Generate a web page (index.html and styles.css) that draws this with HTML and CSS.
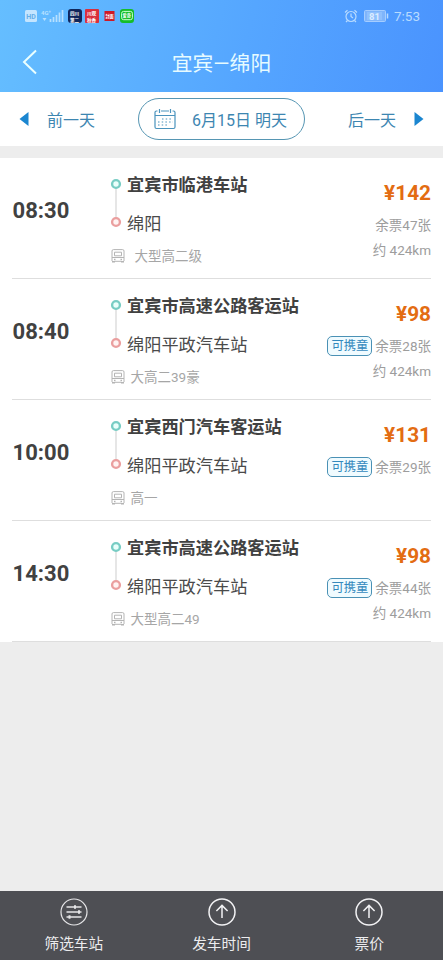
FILE: index.html
```html
<!DOCTYPE html>
<html lang="zh-CN">
<head>
<meta charset="utf-8">
<title>宜宾—绵阳</title>
<link rel="stylesheet" href="styles.css">
</head>
<body>
<svg class="defs" width="0" height="0">
  <symbol id="bus" viewBox="0 0 14 14"><g fill="none" stroke="#b4b4b4" stroke-width="1"><path d="M1 12V2Q1 .6 2.400 .6h9.200Q13 .6 13 2v10M3.500 3.200h7v3.600h-7zM1 8.500h12M4 12.300h6"/></g><path fill="#b4b4b4" d="M3 9.800h1.500v1.400H3zM9.500 9.800H11v1.400H9.500zM1 12h3v1.400H1zM10 12h3v1.400h-3z"/></symbol>
  <symbol id="route" viewBox="0 0 12 52"><path d="M6 10v31" stroke="#d6d6d6" stroke-width="1.2"/><circle cx="6" cy="6" r="3.900" fill="#eafffb" stroke="#78cdc4" stroke-width="2.400"/><circle cx="6" cy="44" r="3.900" fill="#fff3f2" stroke="#ea9f9f" stroke-width="2.400"/></symbol>
  <symbol id="up" viewBox="0 0 28 28"><g fill="none" stroke="#f2f2f4" stroke-width="1.5"><circle cx="14" cy="14" r="13"/><path d="M14 20V7.6M8.4 13 14 7.4l5.6 5.6"/></g></symbol>
</svg>
<header class="header">
  <div class="status">
    <svg class="status-left" width="110" height="16" viewBox="0 0 110 16">
      <rect x="0" y="2" width="12" height="12" rx="1.5" fill="#c4e5ff"/>
      <text x="1.2" y="10.500" class="hd">HD</text>
      <text x="16" y="7" class="net">4G⁺</text>
      <path d="M17.5 10h4l-2 3z" fill="#b7e0ff"/>
      <path d="M25.5 14v-3M28.5 14V9M31.5 14V7M34.5 14V4.500M37.500 14V2" stroke="#b7e0ff" stroke-width="1.7"/>
      <rect x="43" y="1" width="14" height="14" rx="3" fill="#10265a"/>
      <text x="45" y="6.800" class="app">四川</text><text x="45" y="13.600" class="app">第二</text>
      <rect x="60" y="1" width="14" height="14" rx="1" fill="#d92f3d"/>
      <text x="62" y="6.800" class="app">川观</text><text x="62" y="13.600" class="app">秋香</text>
      <rect x="79.500" y="3" width="10" height="10" fill="#cf1825"/>
      <text x="80.400" y="9.600" class="app app-sm">封面</text>
      <rect x="95" y="1" width="14" height="14" rx="3" fill="#15bd29"/>
      <rect x="96.600" y="3.400" width="10.800" height="8.300" rx="2" fill="none" stroke="#caffd0"/><text x="97.500" y="9.400" class="app app-sm">爱奇</text>
    </svg>
    <div class="status-right">
      <svg width="14" height="14" viewBox="0 0 14 14" fill="none" stroke="#b8dbff" stroke-width="1.2"><circle cx="7" cy="7.500" r="5"/><path d="M7 4.500v3l2 1.500M1 3.500 3.500 1.200M13 3.500 10.500 1.200M3.500 11.500 2 13M10.500 11.500 12 13"/></svg>
      <svg class="battery" width="25" height="12" viewBox="0 0 25 12"><rect x=".5" y=".5" width="21" height="11" rx="1" fill="#7fb5fb" stroke="#a5cdff"/><rect x="3" y="2" width="15" height="8" fill="#8fc0fd"/><text x="5" y="9.600" class="level">81</text><path d="M23.500 3.500v5" stroke="#b8dbff" stroke-width="1.500"/></svg>
      <span class="clock">7:53</span>
    </div>
  </div>
  <div class="nav">
    <svg class="back" width="16" height="26" viewBox="0 0 16 26"><path d="M14 1.500 2 13l12 11.500" fill="none" stroke="#eaffff" stroke-width="2"/></svg>
    <h1 class="title">宜宾—绵阳</h1>
  </div>
</header>
<div class="days">
  <div class="day"><svg width="10" height="14" viewBox="0 0 10 14"><path d="M9.500 0v14L.5 7z" fill="#1b86d0"/></svg><span>前一天</span></div>
  <div class="date">
    <svg width="22" height="22" viewBox="0 0 22 22" fill="none" stroke="#4a93bd" stroke-width="1.200"><path d="M3.500 3H2.500A1.500 1.500 0 0 0 1 4.500v14.500a1.500 1.500 0 0 0 1.500 1.500h17a1.500 1.500 0 0 0 1.500-1.500V4.500A1.500 1.500 0 0 0 19.500 3h-1M7 3h8M1 7.500h20M5.500 1v4M16.500 1v4"/><path d="M8 11h11M4 14h15M4 17h11" stroke-dasharray="1.500 2.200"/></svg>
    <span>6月15日 明天</span>
  </div>
  <div class="day next"><span>后一天</span><svg width="10" height="14" viewBox="0 0 10 14"><path d="M.5 0v14l9-7z" fill="#1b86d0"/></svg></div>
</div>
<main class="list">
  <article class="trip">
    <div class="time">08:30</div>
    <svg class="route"><use href="#route"/></svg>
    <div class="places"><div class="from">宜宾市临港车站</div><div class="to">绵阳</div><div class="kind"><svg><use href="#bus"/></svg><span class="indent">大型高二级</span></div></div>
    <div class="fare"><div class="price">¥142</div><div class="left">余票47张</div><div class="km">约 424km</div></div>
  </article>
  <article class="trip">
    <div class="time">08:40</div>
    <svg class="route"><use href="#route"/></svg>
    <div class="places"><div class="from">宜宾市高速公路客运站</div><div class="to">绵阳平政汽车站</div><div class="kind"><svg><use href="#bus"/></svg><span>大高二39豪</span></div></div>
    <div class="fare"><div class="price">¥98</div><div class="left"><span class="tag">可携童</span>余票28张</div><div class="km">约 424km</div></div>
  </article>
  <article class="trip">
    <div class="time">10:00</div>
    <svg class="route"><use href="#route"/></svg>
    <div class="places"><div class="from">宜宾西门汽车客运站</div><div class="to">绵阳平政汽车站</div><div class="kind"><svg><use href="#bus"/></svg><span>高一</span></div></div>
    <div class="fare"><div class="price">¥131</div><div class="left"><span class="tag">可携童</span>余票29张</div></div>
  </article>
  <article class="trip">
    <div class="time">14:30</div>
    <svg class="route"><use href="#route"/></svg>
    <div class="places"><div class="from">宜宾市高速公路客运站</div><div class="to">绵阳平政汽车站</div><div class="kind"><svg><use href="#bus"/></svg><span>大型高二49</span></div></div>
    <div class="fare"><div class="price">¥98</div><div class="left"><span class="tag">可携童</span>余票44张</div><div class="km">约 424km</div></div>
  </article>
</main>
<footer class="tools">
  <div class="tool"><svg viewBox="0 0 28 28" fill="none" stroke="#e6e6e8" stroke-width="1.200"><circle cx="14" cy="14" r="13"/><path d="M6.500 9h15M6.500 14h15M6.500 19h15" stroke-width="1.500"/><path d="M15 7.200v3.600M19 12.200v3.600M9.500 17.200v3.600" stroke-width="2"/></svg><span>筛选车站</span></div>
  <div class="tool"><svg><use href="#up"/></svg><span>发车时间</span></div>
  <div class="tool"><svg><use href="#up"/></svg><span>票价</span></div>
</footer>
</body>
</html>
```
FILE: styles.css
```css
* { box-sizing: border-box; }
body {
  margin: 0;
  height: 960px;
  display: flex;
  flex-direction: column;
  background: #ededed;
  font-family: Roboto, "Noto Sans CJK SC", sans-serif;
  color: #414141;
  white-space: nowrap;
}
svg { display: block; flex: none; }
.defs { position: absolute; }
.header {
  height: 92px;
  background: linear-gradient(104deg, #65beff, #55a6ff 55%, #4a93fe);
}
.status {
  height: 32px;
  padding: 0 23px 0 25px;
  display: flex;
  align-items: center;
  justify-content: space-between;
}
.hd { font: bold 7px Roboto; fill: #64aee8; }
.net { font: bold 6px Roboto; fill: #b7e0ff; }
.app { font: bold 4.6px "Noto Sans CJK SC"; fill: #fff; }
.app-sm { font-size: 4.2px; }
.level { font: bold 9.5px Roboto; fill: #dcecff; }
.status-right { display: flex; align-items: center; }
.battery { margin: 0 5px 0 6px; }
.clock { font-size: 13.5px; color: #b8dbff; line-height: 16px; }
.nav {
  height: 60px;
  display: grid;
  grid-template-columns: 38px 1fr 38px;
  align-items: center;
}
.back { margin-left: 22px; }
.title {
  margin: 0;
  padding-top: 3px;
  font-size: 20.8px;
  font-weight: 400;
  line-height: 30px;
  text-align: center;
  color: #e6fbff;
}
.days {
  height: 54px;
  padding: 0 19px;
  display: flex;
  align-items: center;
  justify-content: space-between;
  background: #fff;
  color: #3d86b1;
  font-size: 16px;
}
.day { width: 76px; display: flex; justify-content: space-between; align-items: center; }
.date {
  width: 167px;
  height: 42px;
  padding: 0 17px 0 15px;
  border: 1px solid #5696b3;
  border-radius: 21px;
  display: flex;
  align-items: center;
  justify-content: space-between;
}
.list { margin-top: 12px; background: #fff; padding: 0 12px; }
.trip {
  height: 121px;
  border-bottom: 1px solid #dedede;
  display: flex;
}
.time {
  width: 98px;
  padding-left: 0.6px;
  font-size: 22px;
  font-weight: 700;
  line-height: 26px;
  margin-top: 40px;
}
.route { width: 12px; height: 52px; margin: 20px 5px 0 0; }
.places { flex: 1; padding-top: 14px; font-size: 17.2px; }
.from { font-weight: 700; line-height: 26px; }
.to { line-height: 26px; margin-top: 13px; color: #4a4a4a; }
.kind {
  display: flex;
  align-items: center;
  margin: 8px 0 0 -16.5px;
  font-size: 13.5px;
  line-height: 20px;
  color: #a6a6a6;
}
.kind svg { width: 14px; height: 14px; margin-right: 6px; }
.kind span { padding-top: 1px; }
.kind .indent { padding-left: 4px; }
.fare {
  padding-top: 22px;
  text-align: right;
  font-size: 13.5px;
  color: #9d9d9d;
}
.price { font-size: 20.8px; font-weight: 700; line-height: 26px; color: #e36c12; }
.left { display: flex; align-items: center; justify-content: flex-end; height: 20px; line-height: 16px; margin-top: 9px; }
.tag {
  height: 20px;
  padding: 0 3px;
  margin-right: 3px;
  border: 1px solid #4a91b5;
  border-radius: 5px;
  background: #f0fbff;
  color: #3489bd;
  font-size: 12.3px;
  line-height: 18px;
}
.km { line-height: 20px; margin-top: 5px; }
.tools {
  height: 69px;
  margin-top: auto;
  display: flex;
  background: #4e4f54;
  color: #ececee;
  font-size: 14.7px;
}
.tool {
  flex: 1;
  display: flex;
  flex-direction: column;
  align-items: center;
  padding-top: 7px;
}
.tool svg { width: 28px; height: 28px; }
.tool span { margin-top: 8px; line-height: 20px; }
```
